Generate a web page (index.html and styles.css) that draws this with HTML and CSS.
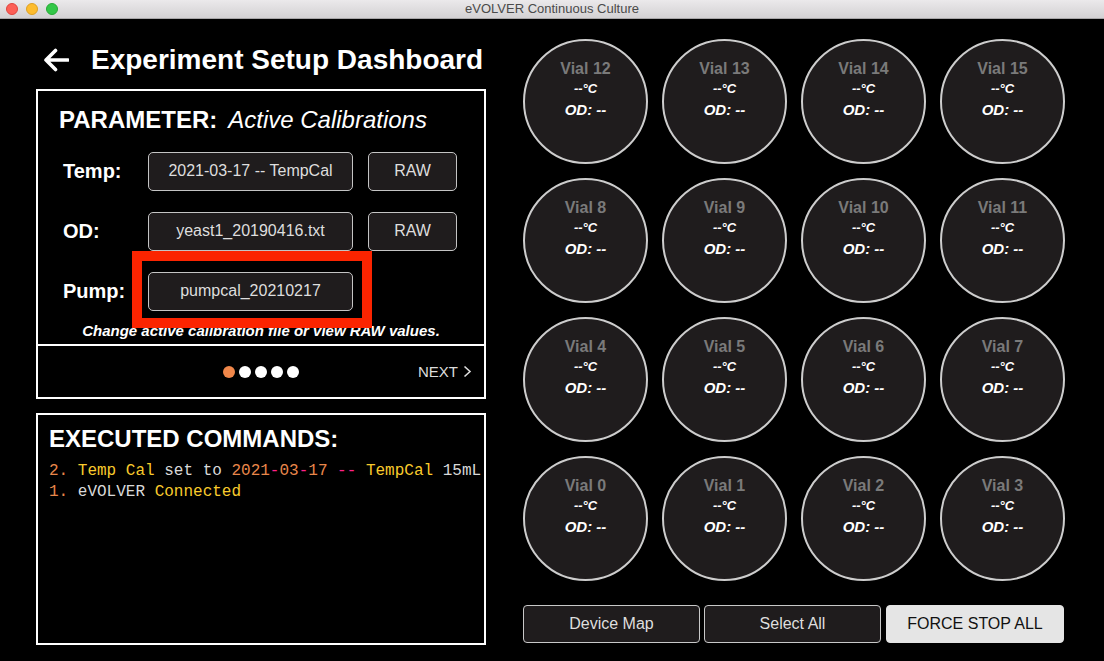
FILE: index.html
```html
<!DOCTYPE html>
<html>
<head>
<meta charset="utf-8">
<title>eVOLVER Continuous Culture</title>
<link rel="stylesheet" href="styles.css">
</head>
<body>
<div class="titlebar">
  <div class="lights">
    <span class="light red"></span>
    <span class="light yellow"></span>
    <span class="light green"></span>
  </div>
  <div class="wintitle">eVOLVER Continuous Culture</div>
</div>
<div class="main">
  <div class="left">
    <div class="header">
      <svg class="back" width="26" height="24" viewBox="0 0 26 24"><path d="M25 12 H3 M12.5 2.5 L3 12 L12.5 21.5" fill="none" stroke="#fff" stroke-width="3.6" stroke-linecap="round" stroke-linejoin="round"/></svg>
      <h1 class="title">Experiment Setup Dashboard</h1>
    </div>
    <div class="param-box">
      <div class="param-top">
        <div class="param-head"><span class="ph-b">PARAMETER:</span><span class="ph-i">Active Calibrations</span></div>
        <div class="rows">
          <div class="row"><span class="lbl">Temp:</span><div class="btn file">2021-03-17 -- TempCal</div><div class="btn raw">RAW</div></div>
          <div class="row"><span class="lbl">OD:</span><div class="btn file">yeast1_20190416.txt</div><div class="btn raw">RAW</div></div>
          <div class="row"><span class="lbl">Pump:</span><div class="btn file">pumpcal_20210217</div></div>
        </div>
        <div class="caption">Change active calibration file or view RAW values.</div>
      </div>
      <div class="param-nav">
        <div class="dots"><span class="dot on"></span><span class="dot"></span><span class="dot"></span><span class="dot"></span><span class="dot"></span></div>
        <div class="next">NEXT <svg width="9" height="13" viewBox="0 0 9 13"><path d="M1.5 1.5 L7 6.5 L1.5 11.5" fill="none" stroke="#ddd" stroke-width="1.6"/></svg></div>
      </div>
      <div class="highlight"></div>
    </div>
    <div class="exec-box">
      <div class="exec-head">EXECUTED COMMANDS:</div>
      <div class="log">
        <div class="ln"><span class="o">2.</span> <span class="y">Temp Cal</span> <span class="g">set to</span> <span class="o">2021</span><span class="p">-</span><span class="o">03</span><span class="p">-</span><span class="o">17</span> <span class="p">--</span> <span class="y">TempCal</span> <span class="g">15mL</span></div>
        <div class="ln"><span class="o">1.</span> <span class="g">eVOLVER</span> <span class="y">Connected</span></div>
      </div>
    </div>
  </div>
  <div class="right">
    <div class="vials">
      <div class="vial"><div class="vn">Vial 12</div><div class="vt">--°C</div><div class="vo">OD: --</div></div>
      <div class="vial"><div class="vn">Vial 13</div><div class="vt">--°C</div><div class="vo">OD: --</div></div>
      <div class="vial"><div class="vn">Vial 14</div><div class="vt">--°C</div><div class="vo">OD: --</div></div>
      <div class="vial"><div class="vn">Vial 15</div><div class="vt">--°C</div><div class="vo">OD: --</div></div>
      <div class="vial"><div class="vn">Vial 8</div><div class="vt">--°C</div><div class="vo">OD: --</div></div>
      <div class="vial"><div class="vn">Vial 9</div><div class="vt">--°C</div><div class="vo">OD: --</div></div>
      <div class="vial"><div class="vn">Vial 10</div><div class="vt">--°C</div><div class="vo">OD: --</div></div>
      <div class="vial"><div class="vn">Vial 11</div><div class="vt">--°C</div><div class="vo">OD: --</div></div>
      <div class="vial"><div class="vn">Vial 4</div><div class="vt">--°C</div><div class="vo">OD: --</div></div>
      <div class="vial"><div class="vn">Vial 5</div><div class="vt">--°C</div><div class="vo">OD: --</div></div>
      <div class="vial"><div class="vn">Vial 6</div><div class="vt">--°C</div><div class="vo">OD: --</div></div>
      <div class="vial"><div class="vn">Vial 7</div><div class="vt">--°C</div><div class="vo">OD: --</div></div>
      <div class="vial"><div class="vn">Vial 0</div><div class="vt">--°C</div><div class="vo">OD: --</div></div>
      <div class="vial"><div class="vn">Vial 1</div><div class="vt">--°C</div><div class="vo">OD: --</div></div>
      <div class="vial"><div class="vn">Vial 2</div><div class="vt">--°C</div><div class="vo">OD: --</div></div>
      <div class="vial"><div class="vn">Vial 3</div><div class="vt">--°C</div><div class="vo">OD: --</div></div>
    </div>
    <div class="actions">
      <div class="abtn">Device Map</div>
      <div class="abtn">Select All</div>
      <div class="abtn stop">FORCE STOP ALL</div>
    </div>
  </div>
</div>
</body>
</html>
```

FILE: styles.css
```css
* { box-sizing: border-box; }
html, body { margin: 0; padding: 0; }
body {
  width: 1104px;
  height: 661px;
  background: #000;
  font-family: "Liberation Sans", Arial, Helvetica, sans-serif;
  color: #fff;
  overflow: hidden;
}
.titlebar {
  height: 19px;
  background: linear-gradient(#ebe9eb, #d3d1d3);
  border-bottom: 1px solid #a8a6a8;
  display: flex;
  align-items: center;
  justify-content: center;
  position: relative;
}
.lights {
  position: absolute;
  left: 6px;
  top: 3px;
  display: flex;
  gap: 8px;
}
.light { width: 12px; height: 12px; border-radius: 50%; display: block; }
.red { background: #fc5f57; border: 0.5px solid #e0443e; }
.yellow { background: #fdbc2e; border: 0.5px solid #dea123; }
.green { background: #33c748; border: 0.5px solid #27aa35; }
.wintitle { font-size: 13px; color: #4a4a4a; line-height: 18px; }

.main {
  display: flex;
  padding-left: 36px;
  gap: 37px;
  height: 642px;
}
.left { width: 450px; display: flex; flex-direction: column; }
.header {
  height: 70px;
  padding-top: 12px;
  display: flex;
  align-items: center;
}
.back { margin-left: 7px; margin-right: 22px; flex: none; }
.title {
  margin: 0;
  font-size: 28px;
  font-weight: bold;
  line-height: 34px;
  color: #fff;
}

.param-box {
  position: relative;
  height: 310px;
  border: 2px solid #fff;
  display: flex;
  flex-direction: column;
}
.param-top {
  padding: 15px 0 0 21px;
  height: 255px;
  border-bottom: 2px solid #fff;
}
.param-head { line-height: 28px; font-size: 24px; }
.ph-b { font-weight: bold; }
.ph-i { font-style: italic; margin-left: 11px; }
.rows {
  margin-top: 18px;
  display: flex;
  flex-direction: column;
  gap: 21px;
}
.row { display: flex; align-items: center; height: 39px; }
.lbl {
  width: 89px;
  padding-left: 4px;
  font-size: 20px;
  font-weight: bold;
}
.btn {
  height: 39px;
  border: 1.5px solid #c4c4c4;
  border-radius: 5px;
  background: #1f1c1d;
  color: #dedede;
  font-size: 16px;
  display: flex;
  align-items: center;
  justify-content: center;
  padding-bottom: 2px;
}
.file { width: 205px; }
.raw { width: 89px; margin-left: 15px; }
.caption {
  margin-top: 11px;
  margin-left: -21px;
  text-align: center;
  font-size: 15px;
  font-weight: bold;
  font-style: italic;
  line-height: 18px;
}
.param-nav {
  flex: 1;
  display: grid;
  grid-template-columns: 1fr auto 1fr;
  align-items: center;
}
.dots { grid-column: 2; display: flex; gap: 4px; }
.dot { width: 12px; height: 12px; border-radius: 50%; background: #fff; display: block; }
.dot.on { background: #f0874a; }
.next {
  grid-column: 3;
  justify-self: end;
  margin-right: 12px;
  display: flex;
  align-items: center;
  gap: 5px;
  font-size: 15px;
  color: #dcdcdc;
}
.highlight {
  position: absolute;
  left: 94px;
  top: 160px;
  width: 240px;
  height: 77px;
  border: 10px solid #fb2400;
  pointer-events: none;
}

.exec-box {
  margin-top: 14px;
  height: 232px;
  border: 2px solid #fff;
  padding: 10px 0 0 11px;
}
.exec-head {
  font-size: 24px;
  font-weight: bold;
  line-height: 28px;
}
.log {
  margin-top: 8px;
  font-family: "Liberation Mono", "DejaVu Sans Mono", monospace;
  font-size: 16px;
  line-height: 21px;
  color: #d9d9d9;
}
.ln { white-space: pre; }
.o { color: #e9874b; }
.y { color: #f9cb2c; }
.g { color: #d9d9d9; }
.p { color: #ff2188; }

.right {
  width: 541px;
  padding-top: 20px;
  display: flex;
  flex-direction: column;
}
.vials {
  display: grid;
  grid-template-columns: repeat(4, 125px);
  grid-auto-rows: 125px;
  column-gap: 14px;
  row-gap: 14px;
}
.vial {
  width: 125px;
  height: 125px;
  border-radius: 50%;
  border: 2px solid #cdcdcd;
  background: #1f1c1d;
  display: flex;
  flex-direction: column;
  align-items: center;
  padding-top: 18px;
}
.vn {
  font-size: 16px;
  font-weight: bold;
  color: #7a7a7a;
  line-height: 20px;
}
.vt {
  font-size: 13px;
  font-weight: bold;
  font-style: italic;
  line-height: 20px;
}
.vo {
  font-size: 15px;
  font-weight: bold;
  font-style: italic;
  line-height: 22px;
}
.actions {
  margin-top: 24px;
  display: flex;
  gap: 4px;
}
.abtn {
  width: 177px;
  height: 38px;
  border: 1.5px solid #c8c8c8;
  border-radius: 4px;
  background: #1f1c1d;
  color: #dedede;
  font-size: 16px;
  display: flex;
  align-items: center;
  justify-content: center;
}
.abtn.stop {
  width: 178px;
  margin-left: 1px;
  background: #e5e5e5;
  border-color: #e5e5e5;
  color: #111;
}
```
